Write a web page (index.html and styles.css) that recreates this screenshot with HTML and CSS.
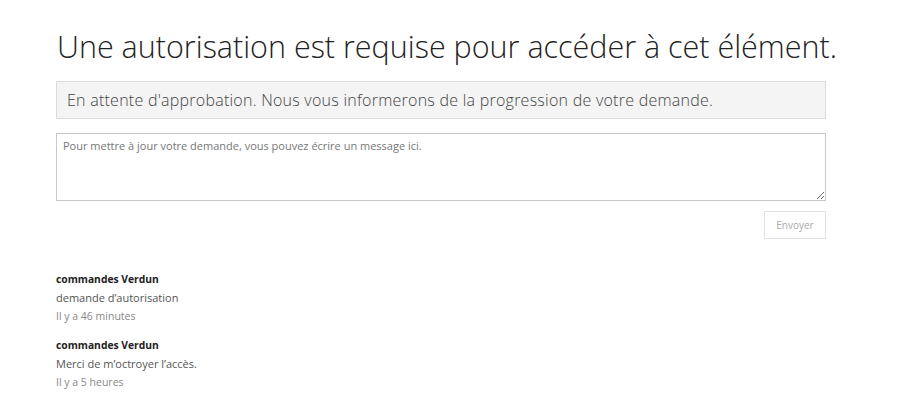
FILE: index.html
```html
<!DOCTYPE html>
<html lang="fr">
<head>
<meta charset="utf-8">
<link rel="stylesheet" href="styles.css">
</head>
<body>
<main class="page">
  <h1 class="title">Une autorisation est requise pour accéder à cet élément.</h1>
  <div class="status">En attente d'approbation. Nous vous informerons de la progression de votre demande.</div>
  <textarea class="message" placeholder="Pour mettre à jour votre demande, vous pouvez écrire un message ici."></textarea>
  <div class="actions"><button class="send" disabled>Envoyer</button></div>
  <ul class="history">
    <li class="entry">
      <div class="author">commandes Verdun</div>
      <div class="text">demande d’autorisation</div>
      <div class="time">Il y a 46 minutes</div>
    </li>
    <li class="entry">
      <div class="author">commandes Verdun</div>
      <div class="text">Merci de m’octroyer l’accès.</div>
      <div class="time">Il y a 5 heures</div>
    </li>
  </ul>
</main>
</body>
</html>
```

FILE: styles.css
```css
html, body { margin: 0; padding: 0; background: #fff; }
body { font-family: "Open Sans", "Liberation Sans", sans-serif; color: #333; }
.page { width: 770px; margin-left: 56px; padding-top: 26px; display: flex; flex-direction: column; }
.title { margin: 0; font-weight: 300; font-size: 30.5px; line-height: 40px; color: #222; letter-spacing: 0; padding-left: 1px; white-space: nowrap; }
.status { margin-top: 15px; height: 38px; box-sizing: border-box; border: 1px solid #dcdcdc; background: #f4f4f4; font-size: 16px; letter-spacing: 0.25px; font-weight: 300; color: #444; padding: 0 10px; display: flex; align-items: center; }
.message { margin-top: 14px; height: 68px; box-sizing: border-box; border: 1px solid #c8c8c8; resize: vertical; font-family: inherit; font-size: 11px; padding: 4px 6px; width: 100%; display: block; }
.message::placeholder { color: #777; }
.actions { display: flex; justify-content: flex-end; margin-top: 10px; }
.send { width: 62px; height: 28px; border: 1px solid #e2e2e2; background: #fff; color: #aaa; font-family: inherit; font-size: 10px; padding: 0; }
.history { list-style: none; margin: 31px 0 0; padding: 0; }
.entry { margin-bottom: 10.5px; font-size: 11px; line-height: 18.5px; }
.author { font-weight: 700; color: #222; font-size: 10.3px; }
.text { color: #555; }
.time { color: #888; font-size: 10.5px; }
```
